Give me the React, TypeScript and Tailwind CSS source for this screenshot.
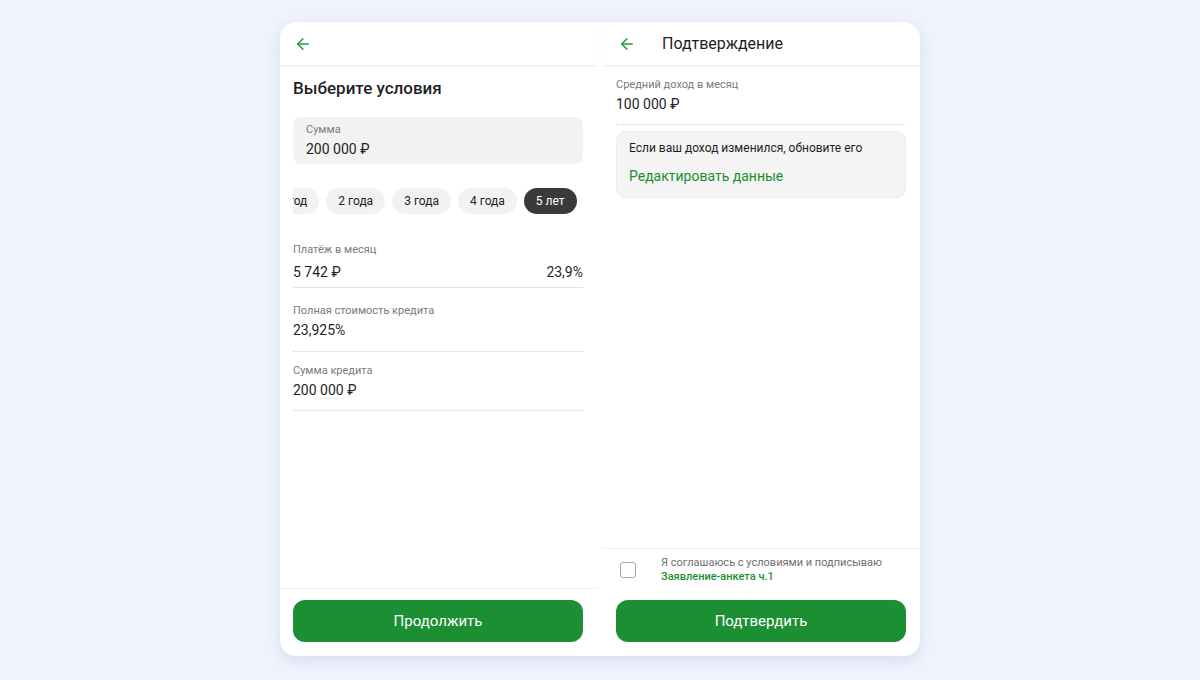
import { ArrowLeft } from 'lucide-react';

const font = { fontFamily: 'Roboto, "Noto Sans", sans-serif' };

const terms = ['1 год', '2 года', '3 года', '4 года', '5 лет'];

const Header = ({ title }: { title?: string }) => (
  <div className="flex h-[44px] shrink-0 items-center border-b border-[#ebebeb] pl-[14px] shadow-[0_1px_2px_rgba(0,0,0,0.04)]">
    <ArrowLeft className="h-[18px] w-[18px] text-[#21a038]" strokeWidth={2} />
    {title && <span className="ml-[26px] text-[16px] text-[#1f1f1f]">{title}</span>}
  </div>
);

const GreenButton = ({ label }: { label: string }) => (
  <button className="flex h-[42px] w-full items-center justify-center rounded-[12px] bg-[#1b8f31] text-[15px] text-white">
    {label}
  </button>
);

const ConditionsPanel = () => (
  <div className="flex w-[316px] flex-col">
    <Header />
    <div className="flex flex-1 flex-col px-[13px]">
      <h1 className="mt-[11px] text-[17px] font-medium leading-[22px] text-[#1f1f1f]">Выберите условия</h1>

      <div className="mt-[18px] rounded-[8px] bg-[#f2f2f2] px-[13px] pb-[5px] pt-[6px]">
        <div className="text-[11px] leading-[14px] text-[#7a7a7a]">Сумма</div>
        <div className="mt-[2px] text-[14px] leading-5 text-[#1f1f1f]">200 000 ₽</div>
      </div>

      <div className="mt-[24px] overflow-hidden">
        <div className="-ml-[26px] flex gap-[7px]">
          {terms.map((t) => (
            <span
              key={t}
              className={
                t === '5 лет'
                  ? 'flex h-[26px] shrink-0 items-center rounded-full bg-[#3a3a3a] px-[12px] text-[12px] text-white'
                  : 'flex h-[26px] shrink-0 items-center rounded-full bg-[#f2f2f2] px-[12px] text-[12px] text-[#1f1f1f]'
              }
            >
              {t}
            </span>
          ))}
        </div>
      </div>

      <div className="mt-[29px] border-b border-[#e2e2e2] pb-[5px]">
        <div className="text-[11px] leading-[14px] text-[#7a7a7a]">Платёж в месяц</div>
        <div className="mt-[5px] flex justify-between text-[14px] leading-5 text-[#1f1f1f]">
          <span>5 742 ₽</span>
          <span>23,9%</span>
        </div>
      </div>

      <div className="mt-[16px] border-b border-dotted border-[#d6d6d6] pb-[11px]">
        <div className="text-[11px] leading-[14px] text-[#7a7a7a]">Полная стоимость кредита</div>
        <div className="mt-[2px] text-[14px] leading-5 text-[#1f1f1f]">23,925%</div>
      </div>

      <div className="mt-[12px] border-b border-dotted border-[#d6d6d6] pb-[10px]">
        <div className="text-[11px] leading-[14px] text-[#7a7a7a]">Сумма кредита</div>
        <div className="mt-[2px] text-[14px] leading-5 text-[#1f1f1f]">200 000 ₽</div>
      </div>

      <div className="flex-1" />
    </div>
    <div className="border-t border-[#f2f2f2] px-[13px] pb-[14px] pt-[11px]">
      <GreenButton label="Продолжить" />
    </div>
  </div>
);

const ConfirmPanel = () => (
  <div className="flex w-[316px] flex-col">
    <Header title="Подтверждение" />
    <div className="flex flex-1 flex-col pl-[12px] pr-[14px]">
      <div className="mt-[12px] border-b border-dotted border-[#d6d6d6] pb-[10px]">
        <div className="text-[11px] leading-[14px] text-[#7a7a7a]">Средний доход в месяц</div>
        <div className="mt-[2px] text-[14px] leading-5 text-[#1f1f1f]">100 000 ₽</div>
      </div>

      <div className="mt-[6px] rounded-[10px] border border-[#ececec] bg-[#f4f4f4] px-[12px] pb-[11px] pt-[8px]">
        <div className="text-[12px] leading-4 text-[#1f1f1f]">Если ваш доход изменился, обновите его</div>
        <div className="mt-[10px] text-[14px] leading-5 text-[#1b8f31]">Редактировать данные</div>
      </div>

      <div className="flex-1" />
    </div>
    <div className="border-t border-[#f2f2f2] pl-[12px] pr-[14px] pb-[14px] pt-[7px]">
      <label className="flex items-center">
        <span className="ml-[4px] h-[16px] w-[16px] shrink-0 rounded-[3px] border-[1.5px] border-[#a8a8a8] bg-white" />
        <span className="ml-[25px] flex flex-col text-[11px] leading-[14px]">
          <span className="text-[#6f6f6f]">Я соглашаюсь с условиями и подписываю</span>
          <span className="font-medium text-[#1b8f31]">Заявление-анкета ч.1</span>
        </span>
      </label>
      <div className="mt-[16px]">
        <GreenButton label="Подтвердить" />
      </div>
    </div>
  </div>
);

export default function App() {
  return (
    <div className="flex h-[680px] w-[1200px] justify-center bg-[#eef3fd] pt-[22px]" style={font}>
      <div className="flex h-[634px] w-[640px] gap-[8px] overflow-hidden rounded-[16px] bg-white shadow-[0_4px_14px_rgba(40,60,110,0.12)]">
        <ConditionsPanel />
        <ConfirmPanel />
      </div>
    </div>
  );
}
